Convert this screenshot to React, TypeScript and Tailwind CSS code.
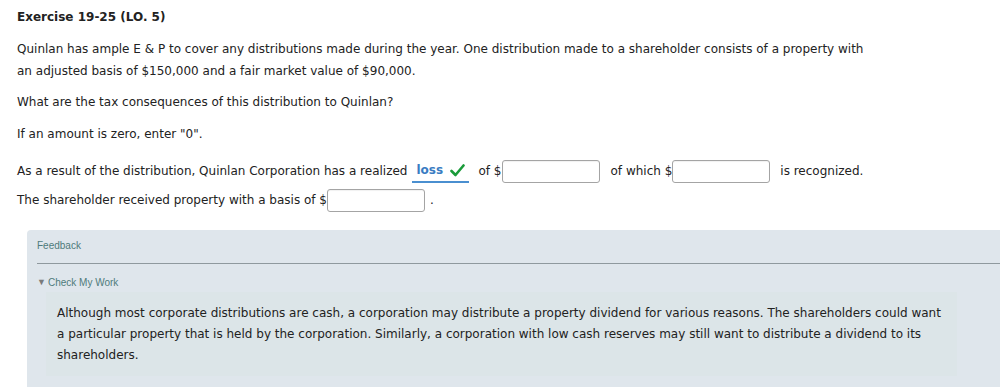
const Field = () => (
  <span className="inline-block h-[23px] w-[98px] rounded-[3px] border border-[#a4a4a4] bg-white align-middle shadow-[inset_0_1px_1px_rgba(0,0,0,0.06)]"></span>
);

const App = () => {
  return (
    <div className="h-[387px] w-[1000px] overflow-hidden bg-white font-['DejaVu_Sans',Verdana,sans-serif] text-[12px] text-[#222]">
      <div className="px-[17px] pt-[8px]">
        <h1 className="text-[12px] font-bold leading-[18px] text-[#222]">
          Exercise 19-25 (LO. 5)
        </h1>

        <p className="mt-[12px] w-[860px] leading-[22px]">
          Quinlan has ample E &amp; P to cover any distributions made during the
          year. One distribution made to a shareholder consists of a property
          with an adjusted basis of $150,000 and a fair market value of $90,000.
        </p>

        <p className="mt-[9px] leading-[22px]">
          What are the tax consequences of this distribution to Quinlan?
        </p>

        <p className="mt-[10px] leading-[22px]">If an amount is zero, enter "0".</p>

        {/* answer row */}
        <div className="mt-[14px] flex h-[24px] items-center whitespace-nowrap">
          <span>As a result of the distribution, Quinlan Corporation has a realized</span>
          <span className="ml-[5px] inline-flex h-[24px] w-[57px] items-center border-b-2 border-[#4a8fd0] pl-[4px]">
            <span className="font-bold text-[#3a7cc2]">loss</span>
            <svg className="ml-[7px]" width="15" height="13" viewBox="0 0 15 13">
              <path d="M1.5 7 L5.5 11 L13.5 1.5" fill="none" stroke="#1a9b3a" strokeWidth="2.6" strokeLinecap="round" strokeLinejoin="round" />
            </svg>
          </span>
          <span className="ml-[9px]">of $</span>
          <Field />
          <span className="ml-[11px]">of which $</span>
          <Field />
          <span className="ml-[10px]">is recognized.</span>
        </div>

        <div className="mt-[5px] flex h-[24px] items-center whitespace-nowrap">
          <span>The shareholder received property with a basis of $</span>
          <Field />
          <span className="ml-[5px]">.</span>
        </div>
      </div>

      {/* feedback panel */}
      <div className="ml-[27px] mt-[18px] h-[170px] rounded-tl-[4px] bg-[#dfe6ec] pl-[10px] font-['Liberation_Sans',Arial,sans-serif]">
        <div className="pt-[10px] text-[10px] leading-[11px] text-[#4f7b7b]">Feedback</div>
        <div className="mt-[12px] h-[1px] bg-[#8f999e]"></div>
        <div className="mt-[13px] flex items-center text-[10px] leading-[11px] text-[#4f7b7b]">
          <span className="mr-[2px] text-[9px] text-[#7a7a7a]">▼</span>
          Check My Work
        </div>
        <div className="ml-[9px] mt-[4px] h-[84px] w-[911px] bg-[#dce5e8] px-[11px] pt-[11px] font-['DejaVu_Sans',Verdana,sans-serif] text-[12px] leading-[21px] text-[#222]">
          Although most corporate distributions are cash, a corporation may
          distribute a property dividend for various reasons. The shareholders
          could want a particular property that is held by the corporation.
          Similarly, a corporation with low cash reserves may still want to
          distribute a dividend to its shareholders.
        </div>
      </div>
    </div>
  );
};

export default App;
